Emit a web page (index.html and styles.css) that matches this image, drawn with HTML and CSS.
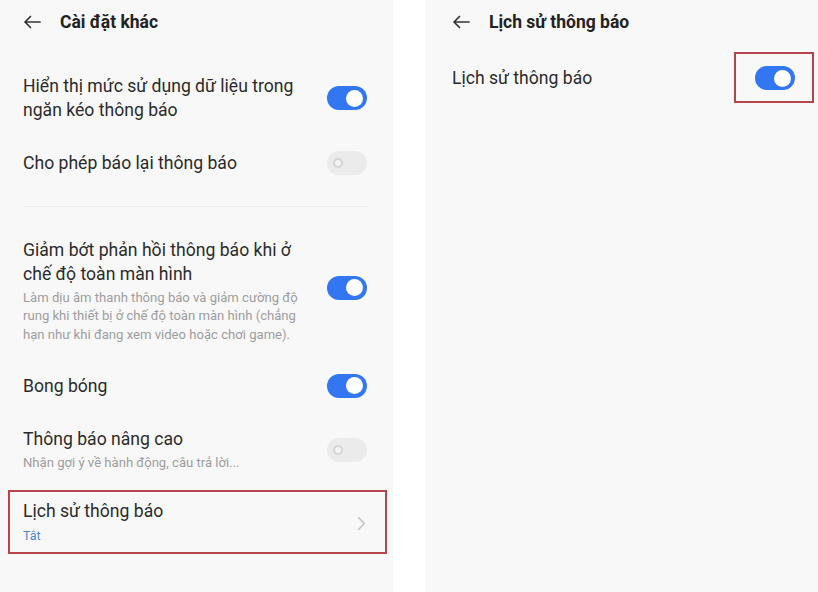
FILE: index.html
```html
<!DOCTYPE html>
<html lang="vi">
<head>
<meta charset="utf-8">
<link rel="stylesheet" href="styles.css">
</head>
<body>
<div class="screen">
  <section class="panel left">
    <header class="bar">
      <svg class="back" width="18" height="14" viewBox="0 0 18 14"><path d="M17 7H2M7.5 1.5L2 7l5.5 5.5" fill="none" stroke="#333" stroke-width="1.7" stroke-linecap="round" stroke-linejoin="round"/></svg>
      <h1 class="title">Cài đặt khác</h1>
    </header>
    <div class="list">
      <div class="row r1">
        <div class="text"><div class="label">Hiển thị mức sử dụng dữ liệu trong<br>ngăn kéo thông báo</div></div>
        <span class="toggle on"><i></i></span>
      </div>
      <div class="row r2">
        <div class="text"><div class="label">Cho phép báo lại thông báo</div></div>
        <span class="toggle off"><i></i></span>
      </div>
      <div class="divider"></div>
      <div class="row r3">
        <div class="text">
          <div class="label">Giảm bớt phản hồi thông báo khi ở<br>chế độ toàn màn hình</div>
          <div class="sub">Làm dịu âm thanh thông báo và giảm cường độ<br>rung khi thiết bị ở chế độ toàn màn hình (chẳng<br>hạn như khi đang xem video hoặc chơi game).</div>
        </div>
        <span class="toggle on"><i></i></span>
      </div>
      <div class="row r4">
        <div class="text"><div class="label">Bong bóng</div></div>
        <span class="toggle on"><i></i></span>
      </div>
      <div class="row r5">
        <div class="text">
          <div class="label">Thông báo nâng cao</div>
          <div class="sub">Nhận gợi ý về hành động, câu trả lời...</div>
        </div>
        <span class="toggle off"><i></i></span>
      </div>
      <div class="row highlight">
        <div class="text">
          <div class="label">Lịch sử thông báo</div>
          <div class="value">Tắt</div>
        </div>
        <svg class="chev" width="9" height="15" viewBox="0 0 9 15"><path d="M1.5 1.5l6 6-6 6" fill="none" stroke="#c4c4c4" stroke-width="1.5" stroke-linecap="round" stroke-linejoin="round"/></svg>
      </div>
    </div>
  </section>
  <section class="panel right">
    <header class="bar">
      <svg class="back" width="18" height="14" viewBox="0 0 18 14"><path d="M17 7H2M7.5 1.5L2 7l5.5 5.5" fill="none" stroke="#333" stroke-width="1.7" stroke-linecap="round" stroke-linejoin="round"/></svg>
      <h1 class="title">Lịch sử thông báo</h1>
    </header>
    <div class="row rr">
      <div class="label">Lịch sử thông báo</div>
      <div class="tbox"><span class="toggle on"><i></i></span></div>
    </div>
  </section>
</div>
</body>
</html>
```
FILE: styles.css
```css
* { box-sizing: border-box; }
html, body { margin: 0; padding: 0; background: #ffffff; }
body { font-family: Roboto, "Noto Sans", "Liberation Sans", sans-serif; color: #2a2a2a; }
.screen { display: flex; width: 818px; height: 592px; overflow: hidden; }
.panel { height: 592px; background: #f8f8f8; }
.panel.left { width: 393px; }
.panel.right { width: 393px; margin-left: 32px; padding-left: 27px; padding-right: 4px; }
.bar { height: 44px; display: flex; align-items: center; }
.left .bar { padding-left: 23px; }
.back { flex: none; }
.title { margin: 0 0 0 19px; font-size: 17.5px; font-weight: 700; color: #222; }
.list { padding: 0 26px 0 23px; }
.row { display: flex; align-items: center; justify-content: space-between; }
.text { flex: 1; }
.label { font-size: 17.6px; line-height: 24px; color: #2b2b2b; }
.sub { font-size: 13.1px; line-height: 18.3px; color: #9d9d9d; margin-top: 3px; }
.r1 { margin-top: 30px; }
.r2 { margin-top: 29px; }
.divider { margin-top: 31px; height: 1px; background: #ececec; }
.r3 { margin-top: 31px; }
.r3 .toggle { margin-top: -6px; }
.r4 { margin-top: 30px; }
.r5 { margin-top: 29px; }
.toggle { position: relative; display: block; flex: none; width: 40px; height: 24px; border-radius: 12px; }
.toggle.on { background: #3276f2; }
.toggle.on i { position: absolute; right: 4px; top: 3.5px; width: 17px; height: 17px; border-radius: 50%; background: #fff; }
.toggle.off { background: #ebebeb; }
.toggle.off i { position: absolute; left: 6px; top: 7px; width: 10px; height: 10px; border-radius: 50%; border: 2px solid #d4d4d4; background: #f4f4f4; }
.highlight { margin: 18px -20px 0 -15px; height: 64px; border: 2px solid #b5454b; padding: 7px 19px 7px 13px; }
.value { font-size: 12.5px; line-height: 18px; margin-top: 4px; color: #4a86d6; }
.chev { flex: none; margin-top: 2px; }
.right .title { margin-left: 19px; }
.rr { margin-top: 8px; }
.tbox { display: flex; flex: none; width: 80px; height: 51px; border: 2px solid #b5454b; padding: 12px 17px 11px 19px; }
```
